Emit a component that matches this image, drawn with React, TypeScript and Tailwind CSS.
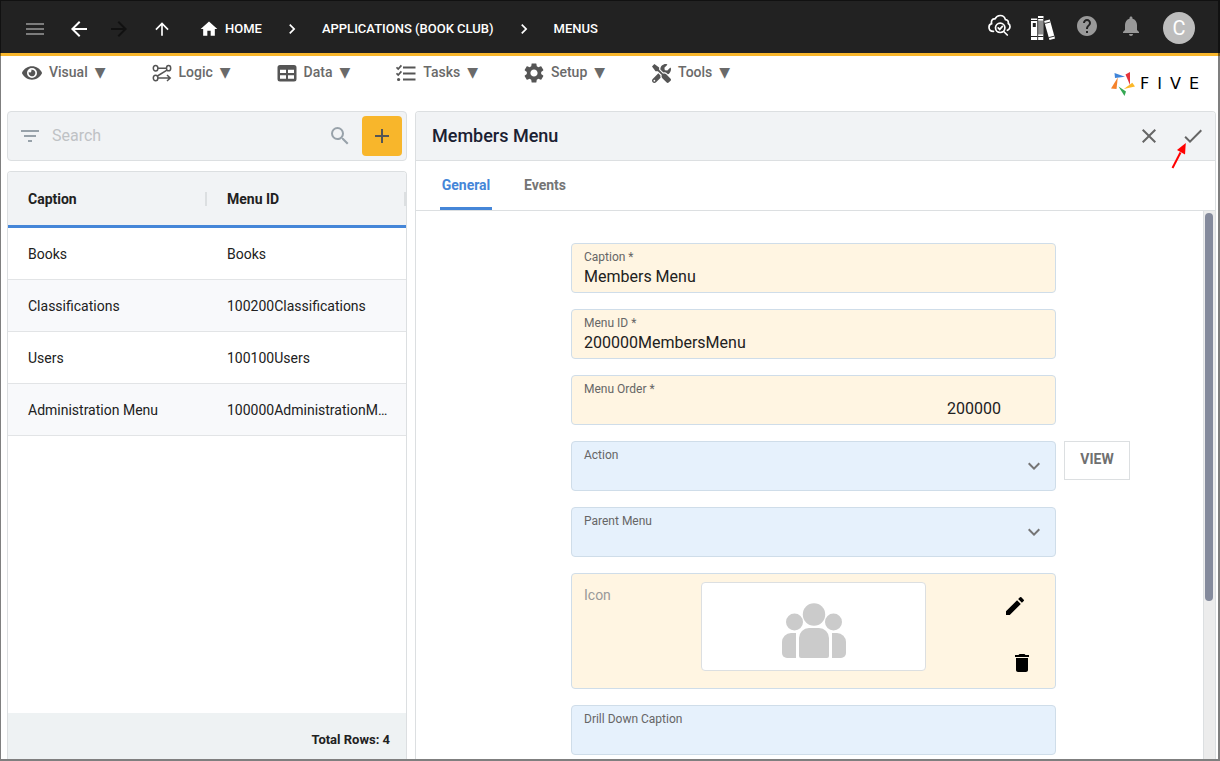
import type { ReactNode } from "react";
import {
  MdAdd,
  MdArrowBack,
  MdArrowForward,
  MdArrowUpward,
  MdCheck,
  MdChevronRight,
  MdClose,
  MdDelete,
  MdEdit,
  MdExpandMore,
  MdFilterList,
  MdHelp,
  MdHome,
  MdMenu,
  MdNotifications,
  MdSearch,
  MdSettings,
} from "react-icons/md";
import { FaEye, FaTools } from "react-icons/fa";

function LogicIcon() {
  return (
    <svg width="20" height="20" viewBox="0 0 20 20" fill="none" stroke="currentColor" strokeWidth="1.5">
      <ellipse cx="3.6" cy="5.2" rx="2.3" ry="2.8" />
      <ellipse cx="16.6" cy="5.2" rx="2.1" ry="2.6" />
      <ellipse cx="3.6" cy="15" rx="2.3" ry="2.8" />
      <path d="M6 5.200h8.500M15 7.200 5.400 13M6 15h12M15 12l3.200 3-3.200 3" />
    </svg>
  );
}

function TableIcon() {
  return (
    <svg width="20" height="20" viewBox="0 0 20 20" fill="currentColor" fillRule="evenodd">
      <path d="M3 2h14a2.500 2.500 0 0 1 2.500 2.500v11.500a2.500 2.500 0 0 1-2.500 2.500H3a2.500 2.500 0 0 1-2.500-2.500v-11.500A2.500 2.500 0 0 1 3 2ZM3 6.800v3.200h6V6.800ZM11 6.800v3.200h6V6.800ZM3 12.200v3.600h6v-3.600ZM11 12.200v3.600h6v-3.600Z" />
    </svg>
  );
}

function TasksIcon() {
  return (
    <svg width="20" height="20" viewBox="0 0 20 20" fill="none" stroke="currentColor">
      <path d="M7 4.500h12.500M7 10.500h12.500M7 16.500h12.500" strokeWidth="2.200" />
      <path d="m.5 4.300 1.700 1.700L5.400 2.400M.5 10.300 2.200 12l3.200-3.600" strokeWidth="1.700" />
      <circle cx="2.600" cy="16.500" r="1.600" fill="currentColor" stroke="none" />
    </svg>
  );
}

function CloudSearchIcon() {
  return (
    <svg width="24" height="24" viewBox="0 0 24 24" fill="none" stroke="currentColor" strokeWidth="1.700" strokeLinecap="round">
      <path d="M6.500 18.300C3.800 18.300 2 16.600 2 14.200c0-1.900 1-3.100 2.600-3.600C3.900 7.400 5.500 5.600 8 5.900 9.200 3.600 11 2.500 13.200 2.500c2.800 0 4.600 1.600 5.200 4.100 2.200.3 3.200 1.700 2.900 3.900 1.200.8 1.800 1.800 1.700 3.300-.1 1.700-1 2.900-2.600 3.500" />
      <circle cx="13.200" cy="14.800" r="4.700" />
      <path d="M16.700 18.500 20.300 22M11.200 14.900l1.500 1.500 2.700-3" />
    </svg>
  );
}

function BooksIcon() {
  return (
    <svg width="24" height="24" viewBox="0 0 24 24">
      <path d="M0 2.500h6.500V24H0Z" fill="#fff" />
      <path d="M0 4.500h6.500M0 20.500h6.500" stroke="#222" strokeWidth="1" />
      <path d="M1.800 7h3v4h-3z" fill="#222" />
      <path d="M7 0h5.500v24H7Z" fill="#fff" />
      <path d="M7 4.500h5.500v14H7Z" fill="#8f8f8f" />
      <path d="M7 20.500h5.500M7 2.500h5.500" stroke="#222" strokeWidth="1" />
      <path d="m13 5 5.800-1.600L24 22.500 18.500 24Z" fill="#fff" />
      <path d="m13.600 7.500 5.700-1.500M17.400 21.700l5.800-1.500" stroke="#222" strokeWidth="0.900" />
      <path d="M6.750 2v22M12.750 3v21" stroke="#222" strokeWidth="0.600" />
    </svg>
  );
}

function PinwheelIcon() {
  return (
    <svg width="24" height="24" viewBox="0 0 24 24">
      <path d="M3.500 1 14 4.800 4 6Z" fill="#3f84d8" />
      <path d="M19 0v13L14.500 2.500Z" fill="#e5353c" />
      <path d="M24 14.500 12.800 17l8.500-6.300Z" fill="#fbb829" />
      <path d="m13.500 24-6-9.500 7.500 5Z" fill="#35a853" />
      <path d="m0 16.500 6.800-11L5.500 17Z" fill="#f5822a" />
    </svg>
  );
}

function PeopleIcon() {
  return (
    <svg width="64" height="56" viewBox="0 0 64 56" fill="#cbcbcb">
      <circle cx="32" cy="11.500" r="11.200" />
      <circle cx="12.500" cy="19" r="8.500" />
      <circle cx="51.500" cy="19" r="8.500" />
      <path d="M27 25h10a10 10 0 0 1 10 10v18a2 2 0 0 1-2 2H19a2 2 0 0 1-2-2V35a10 10 0 0 1 10-10Z" />
      <path d="M14 30H9a9 9 0 0 0-9 9v11a5 5 0 0 0 5 5h9Z" />
      <path d="M50 30h5a9 9 0 0 1 9 9v11a5 5 0 0 1-5 5h-9Z" />
    </svg>
  );
}

const menus: { label: string; icon: ReactNode }[] = [
  { label: "Visual", icon: <FaEye size={20} /> },
  { label: "Logic", icon: <LogicIcon /> },
  { label: "Data", icon: <TableIcon /> },
  { label: "Tasks", icon: <TasksIcon /> },
  { label: "Setup", icon: <MdSettings size={24} className="-m-0.5 shrink-0" /> },
  { label: "Tools", icon: <FaTools size={19} /> },
];

const rows = [
  ["Books", "Books"],
  ["Classifications", "100200Classifications"],
  ["Users", "100100Users"],
  ["Administration Menu", "100000AdministrationMenu"],
];

function Field({
  id,
  label,
  value = "",
  required = false,
  numeric = false,
}: {
  id: string;
  label: string;
  value?: string;
  required?: boolean;
  numeric?: boolean;
}) {
  return (
    <div
      className={`col-start-2 flex h-[50px] flex-col rounded border border-[#cfdde9] pt-[5px] pl-3 ${
        numeric ? "pr-[54px]" : "pr-3"
      } ${required ? "bg-[#fff5e2]" : "bg-[#e6f1fc]"}`}
    >
      <label htmlFor={id} className="text-xs leading-4 text-[#666]">
        {label}
        {required && " *"}
      </label>
      <input
        id={id}
        defaultValue={value}
        className={`h-6 w-full bg-transparent text-base text-[#212121] outline-none ${numeric ? "text-right" : ""}`}
      />
    </div>
  );
}

function SelectField({ id, label }: { id: string; label: string }) {
  return (
    <div className="relative col-start-2 flex h-[50px] rounded border border-[#cfdde9] bg-[#e6f1fc]">
      <label htmlFor={id} className="pointer-events-none absolute top-[5px] left-3 text-xs leading-4 text-[#666]">
        {label}
      </label>
      <select id={id} className="w-full appearance-none bg-transparent px-3 pt-4 outline-none">
        <option value="" />
      </select>
      <MdExpandMore size={24} className="pointer-events-none absolute top-3 right-[9px] text-[#757575]" />
    </div>
  );
}

export default function App() {
  return (
    <div className="relative flex h-screen flex-col overflow-hidden bg-white font-[Roboto,'Liberation_Sans',sans-serif] text-[#212121]">
      <header className="flex h-14 shrink-0 items-center justify-between border-b-3 border-[#f8b62b] bg-[#222] pr-[25px] pl-[23px] text-white">
        <nav className="flex items-center pt-1 text-[13px] font-medium" aria-label="Breadcrumb">
          <button aria-label="Menu" className="mr-5 text-[#7c7c7c]">
            <MdMenu size={24} />
          </button>
          <button aria-label="Back" className="mr-4">
            <MdArrowBack size={24} />
          </button>
          <button aria-label="Forward" className="mr-[21px] text-[#111]">
            <MdArrowForward size={24} />
          </button>
          <button aria-label="Up" className="mr-[27px]">
            <MdArrowUpward size={20} />
          </button>
          <a href="#home" className="flex items-center gap-1.5">
            <MdHome size={20} />
            HOME
          </a>
          <MdChevronRight size={20} className="mx-5" />
          <a href="#applications">APPLICATIONS (BOOK CLUB)</a>
          <MdChevronRight size={20} className="mx-5" />
          <a href="#menus">MENUS</a>
        </nav>
        <div className="flex items-center gap-5 text-[#999]">
          <button aria-label="Inspect" className="pb-1 text-white">
            <CloudSearchIcon />
          </button>
          <button aria-label="Library" className="pt-[3px]">
            <BooksIcon />
          </button>
          <button aria-label="Help" className="pb-0.5">
            <MdHelp size={24} />
          </button>
          <button aria-label="Notifications" className="pb-0.5">
            <MdNotifications size={24} />
          </button>
          <button className="mt-[3px] flex size-8 items-center justify-center rounded-full bg-[#bdbdbd] text-xl text-white">
            C
          </button>
        </div>
      </header>

      <div className="flex h-[55px] shrink-0 items-start justify-between pr-[21px] pl-[22px]">
        <nav className="flex gap-[46px] pt-[5px] text-sm font-medium text-[#6a6a6a]" aria-label="Tools">
          {menus.map((m) => (
            <button key={m.label} className="flex items-center gap-[7px]">
              <span className="flex h-[22px] w-5 items-end justify-center text-[#555]">{m.icon}</span>
              <span className="flex items-center gap-[7px] leading-5">
                {m.label}
                <span className="font-['DejaVu_Sans',sans-serif] leading-5 font-normal">▼</span>
              </span>
            </button>
          ))}
        </nav>
        <a href="#five" className="flex items-center gap-[5px] pt-4 text-black">
          <PinwheelIcon />
          <span className="flex w-[59px] justify-between font-['DejaVu_Sans',sans-serif] text-base leading-5">
            <span>F</span>
            <span>I</span>
            <span>V</span>
            <span>E</span>
          </span>
        </a>
      </div>

      <main className="flex min-h-0 flex-1 gap-2 pr-1 pb-0.5 pl-[7px]">
        <section className="flex w-[400px] shrink-0 flex-col gap-2.5">
          <div className="flex h-[50px] shrink-0 items-center rounded border border-[#dcdfe1] bg-[#f1f3f5] pr-1 pl-2.5">
            <button aria-label="Filter" className="text-[#98a2aa]">
              <MdFilterList size={24} />
            </button>
            <input
              aria-label="Search"
              placeholder="Search"
              className="ml-2.5 min-w-0 flex-1 bg-transparent text-base outline-none placeholder:text-[#bfc2c5]"
            />
            <button aria-label="Find" className="mr-2.5 text-[#98a2aa]">
              <MdSearch size={24} />
            </button>
            <button aria-label="Add" className="flex size-10 items-center justify-center rounded bg-[#f8b62b] text-[#555]">
              <MdAdd size={24} />
            </button>
          </div>

          <div className="flex min-h-0 flex-1 flex-col justify-between overflow-hidden rounded-t border border-b-0 border-[#dcdfe1]">
            <table className="w-full table-fixed border-separate border-spacing-0 text-sm">
              <thead>
                <tr className="bg-[#f1f3f5] text-left">
                  {["Caption", "Menu ID"].map((h) => (
                    <th key={h} className="h-14 border-b-3 border-[#4586d8] p-0 font-bold">
                      <div className="flex h-[14px] items-center border-r-2 border-[#dcdfe1] pl-5">{h}</div>
                    </th>
                  ))}
                </tr>
              </thead>
              <tbody>
                {rows.map(([caption, id]) => (
                  <tr key={id} className="even:bg-[#f8f9fb]">
                    <td className="h-[52px] truncate border-b border-[#e2e4e6] p-0 pl-5">{caption}</td>
                    <td className="h-[52px] truncate border-b border-[#e2e4e6] p-0 pr-3.5 pl-5">{id}</td>
                  </tr>
                ))}
              </tbody>
            </table>
            <div className="h-[46px] shrink-0 bg-[#eef2f3] pt-[17px] pr-4 text-right text-[13px] leading-5 font-bold">
              Total Rows: 4
            </div>
          </div>
        </section>

        <section className="flex min-w-0 flex-1 flex-col overflow-hidden rounded-t border border-b-0 border-[#dcdfe1]">
          <div className="flex h-[49px] shrink-0 items-center justify-between border-b border-[#dcdfe1] bg-[#f1f3f5] pr-2.5 pl-4">
            <h1 className="text-lg font-medium text-[#1a2032]">Members Menu</h1>
            <div className="flex gap-5 text-[#666]">
              <button aria-label="Cancel">
                <MdClose size={24} />
              </button>
              <button aria-label="Save" className="relative">
                <MdCheck size={24} />
                <svg
                  width="18"
                  height="28"
                  viewBox="0 0 18 28"
                  className="pointer-events-none absolute top-[18px] -left-2.5"
                >
                  <path d="m1.500 26 8-15.500" stroke="#f00" strokeWidth="2" />
                  <path d="M14.800 1 14 12.500 6 8Z" fill="#f00" />
                </svg>
              </button>
            </div>
          </div>
          <div className="flex h-[50px] shrink-0 gap-8 border-b border-[#dcdfe1] px-6 text-sm font-bold" role="tablist">
            <button
              role="tab"
              aria-selected="true"
              className="min-w-[52px] rounded-t-xs border-b-3 border-[#4586d8] pt-0.5 text-[#4586d8]"
            >
              General
            </button>
            <button role="tab" aria-selected="false" className="border-b-3 border-transparent pt-0.5 text-[#757575]">
              Events
            </button>
          </div>
          <div className="flex min-h-0 flex-1">
            <form className="grid min-w-0 flex-1 grid-cols-[155fr_485fr_147fr] content-start gap-y-4 overflow-hidden pt-8">
              <Field id="caption" label="Caption" value="Members Menu" required />
              <Field id="menu-id" label="Menu ID" value="200000MembersMenu" required />
              <Field id="menu-order" label="Menu Order" value="200000" required numeric />
              <SelectField id="action" label="Action" />
              <button
                type="button"
                className="ml-2 h-[39px] w-[66px] border border-[#dcdfe1] pb-1 text-sm font-bold text-[#707070]"
              >
                VIEW
              </button>
              <SelectField id="parent-menu" label="Parent Menu" />
              <div className="col-start-2 grid h-[116px] grid-cols-[1fr_225px_1fr] rounded border border-[#cfdde9] bg-[#fff5e2] pt-2">
                <span className="pl-3 text-sm leading-[26px] text-[#999]">Icon</span>
                <div className="flex h-[89px] items-center justify-center rounded-sm border border-[#dcdfe1] bg-white pt-2">
                  <PeopleIcon />
                </div>
                <div className="flex flex-col items-end gap-[33px] pt-3 pr-[21px] text-black">
                  <button type="button" aria-label="Edit icon" className="mr-[7px]">
                    <MdEdit size={24} />
                  </button>
                  <button type="button" aria-label="Delete icon">
                    <MdDelete size={24} />
                  </button>
                </div>
              </div>
              <Field id="drill-down" label="Drill Down Caption" />
            </form>
            <div className="w-3 shrink-0 border-l border-[#dcdfe1] bg-[#ececec] px-px pt-0.5">
              <div className="h-[71%] w-2 rounded-full bg-[#848a9c]" />
            </div>
          </div>
        </section>
      </main>

      <div className="pointer-events-none absolute inset-0 border border-r-2 border-b-2 border-black/50" />
    </div>
  );
}
